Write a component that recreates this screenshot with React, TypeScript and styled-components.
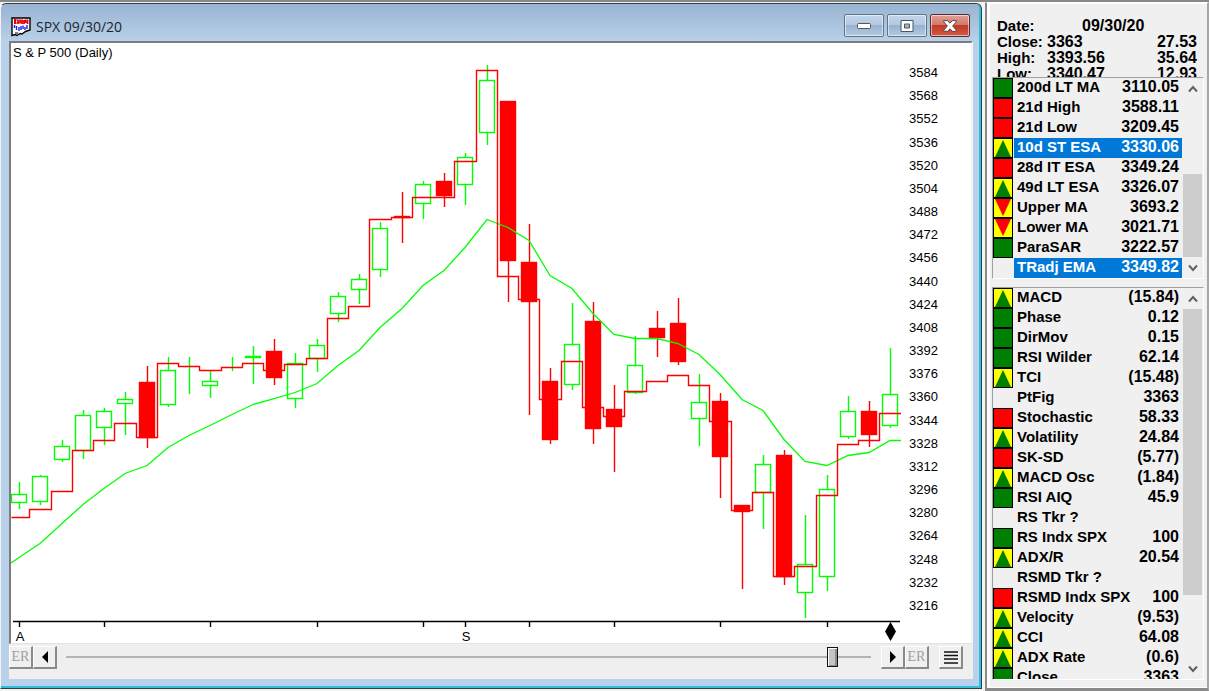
import React from 'react';
import styled, { createGlobalStyle } from 'styled-components';

const SANS = '"Liberation Sans", Arial, sans-serif';

const GlobalStyle = createGlobalStyle`
  * { box-sizing: border-box; }
  body { margin: 0; background: #f0f0f0; font-family: ${SANS}; color: #000; }
`;

const Desktop = styled.div`
  display: flex;
  height: 100vh;
  min-height: 480px;
  border-top: 2px solid #858a88;
  background: #f4f4f4;
  overflow: hidden;
`;

/* ---------- Chart window ---------- */

const ChartWindow = styled.main`
  flex: 1;
  min-width: 0;
  display: flex;
  flex-direction: column;
  margin: 1px 3px 2px 0;
  padding: 0 8px 9px;
  border: 1px solid #2d3e47;
  border-left-color: #eef4fa;
  border-radius: 6px 6px 0 0;
  background: linear-gradient(#99b4d1 0, #b9d1ea 38px, #b9d1ea 100%);
  box-shadow: inset -2px -2px 0 #2cc0dd;
`;

const TitleBar = styled.header`
  display: flex;
  align-items: center;
  gap: 5px;
  height: 37px;
  flex: none;
  padding: 8px 3px 0 2px;
`;

const Title = styled.h1`
  flex: 1;
  margin: 0;
  font: 400 14px/20px "Open Sans", "Segoe UI", sans-serif;
  color: #1a2430;
`;

const Caption = styled.div`
  display: flex;
  gap: 3px;
  margin-top: -2px;
`;

const CaptionButton = styled.button<{ $close?: boolean }>`
  display: flex;
  align-items: center;
  justify-content: center;
  width: 40px;
  height: 23px;
  padding: 0;
  border: 1px solid ${p => (p.$close ? '#5c2a2c' : '#5f738a')};
  border-radius: 2px;
  background: ${p =>
    p.$close
      ? 'linear-gradient(#e0a095 0, #d07a6c 46%, #c23a22 50%, #cf5a45 100%)'
      : 'linear-gradient(#c3d5e9 0, #b4c9e0 46%, #98b2cf 50%, #b3cae3 100%)'};
  box-shadow: inset 0 0 0 1px rgba(255, 255, 255, 0.55);
`;

const ChartView = styled.section`
  position: relative;
  flex: 1;
  min-height: 0;
  display: flex;
  border: solid;
  border-width: 2px 2px 1px 2px;
  border-color: #7c7c7c #f4f4f4 #e3e3e3 #7c7c7c;
  background: #fff;
`;

const ChartName = styled.h2`
  position: absolute;
  left: 2px;
  top: 2px;
  margin: 0;
  font-size: 13px;
  font-weight: 400;
  line-height: 16px;
`;

const Plot = styled.svg`
  flex: 1;
  min-width: 0;
  height: 100%;
  display: block;
`;

const PriceScale = styled.ol`
  flex: none;
  width: 70px;
  margin: 0;
  padding: 20px 0 27px 8px;
  list-style: none;
  display: flex;
  flex-direction: column;
  justify-content: space-between;
  font-size: 13px;
  line-height: 20px;
`;

const Toolbar = styled.footer`
  display: flex;
  flex: none;
  height: 35px;
  padding: 2px 10px 0 0;
  background: #efefef;
`;

const ToolButton = styled.button<{ $spaced?: boolean }>`
  display: flex;
  align-items: center;
  justify-content: center;
  flex: none;
  width: 24px;
  height: 23px;
  margin-left: ${p => (p.$spaced ? '10px' : '0')};
  padding: 0;
  border: solid;
  border-width: 1px 2px 2px 1px;
  border-color: #fff #8a8a8a #8a8a8a #fff;
  background: #f0f0f0;
  color: #a0a0a0;
  font: 400 14px/18px "Liberation Serif", serif;
`;

const DateSlider = styled.input`
  flex: 1;
  min-width: 0;
  height: 22px;
  margin: 0 10px 0 9px;
  appearance: none;
  background: transparent;
  &::-webkit-slider-runnable-track {
    height: 22px;
    background: linear-gradient(#b4b4b4, #b4b4b4) center / 100% 2px no-repeat;
  }
  &::-webkit-slider-thumb {
    appearance: none;
    width: 11px;
    height: 20px;
    margin-top: 1px;
    border: 1px solid #111;
    background: #c4c4c4;
    box-shadow: inset 1px 1px 0 #fff, inset -2px -1px 0 #8c8c8c;
  }
`;

/* ---------- Indicator panel ---------- */

const SidePanel = styled.aside`
  flex: none;
  width: 224px;
  display: flex;
  flex-direction: column;
  border: solid;
  border-width: 1px 2px 3px 2px;
  border-color: #fff #a6a6a6 #8a8a8a #8a8a8a;
  background: #f0f0f0;
  box-shadow: inset 3px 1px 0 #fff, inset 0 -1px 0 #fff;
  padding: 15px 3px 8px 5px;
`;

const Quote = styled.table`
  display: block;
  flex: none;
  height: 59px;
  overflow: hidden;
  border-collapse: collapse;
  font-size: 15px;
  font-weight: 700;
  line-height: 16px;
  padding-left: 5px;
  & th, & td { padding: 0; text-align: left; font-weight: 700; }
  & th { width: 50px; }
  & td { width: 75px; font-size: 16px; }
  & td:last-child { text-align: right; }
  & td[colspan] { text-align: left; padding-left: 35px; width: 150px; }
`;

const ListBox = styled.section<{ $grow?: boolean }>`
  display: flex;
  flex: ${p => (p.$grow ? '1 1 0' : '0 0 202px')};
  min-height: 0;
  margin-top: ${p => (p.$grow ? '8px' : '0')};
  overflow: hidden;
  border: 1px solid #a0a0a0;
  border-right-color: #fff;
  border-bottom-color: #fff;
`;

const RowsPane = styled.div`
  flex: 1;
  overflow: hidden;
`;

const Indicators = styled.table`
  width: 100%;
  border-collapse: collapse;
  table-layout: fixed;
  font-size: 15px;
  line-height: 18px;
`;

const Row = styled.tr<{ $selected?: boolean }>`
  height: 20px;
  color: ${p => (p.$selected ? '#fff' : '#000')};
  & > * { padding: 0; font-weight: 700; white-space: nowrap; }
  & > th { text-align: left; padding: 0 0 2px 3px; }
  & > td:last-child { text-align: right; padding: 0 3px 2px 0; font-size: 16px; }
  & > th, & > td:last-child {
    background: ${p => (p.$selected ? '#0078d7' : 'transparent')};
  }
`;

const SignalCell = styled.td`
  vertical-align: top;
  & svg { display: block; }
`;

const Scroll = styled.div`
  flex: none;
  width: 21px;
  padding-left: 1px;
  display: flex;
  flex-direction: column;
`;

const ScrollButton = styled.button`
  flex: none;
  height: 21px;
  width: 19px;
  padding: 0;
  border: 0;
  background: #f0f0f0;
  display: flex;
  align-items: center;
  justify-content: center;
`;

const ScrollTrack = styled.div<{ $end?: boolean }>`
  flex: 1;
  display: flex;
  align-items: ${p => (p.$end ? 'flex-end' : 'flex-start')};
`;

const ScrollThumb = styled.div<{ $size: string }>`
  width: 19px;
  height: ${p => p.$size};
  background: #cdcdcd;
`;

/* ---------- Data ---------- */

const STEP = 21.25;
const FIRST_X = 19;
const xAt = (i: number) => Math.round(FIRST_X + STEP * i);

type Candle = [up: number, high: number, top: number, bottom: number, low: number];

const candles: Candle[] = [
  [1, 482, 494, 502, 508], [1, 475, 476, 501, 504], [1, 440, 446, 459, 461],
  [1, 410, 415, 450, 458], [1, 408, 411, 427, 444], [1, 392, 399, 403, 434],
  [0, 366, 382, 438, 447], [1, 357, 370, 404, 406], [1, 357, 380, 380, 393],
  [1, 371, 381, 385, 397], [1, 357, 367, 367, 370], [1, 346, 356, 357, 383],
  [0, 339, 351, 378, 384], [1, 353, 363, 398, 407], [1, 339, 345, 358, 371],
  [1, 292, 296, 313, 321], [1, 274, 279, 289, 303], [1, 222, 228, 269, 276],
  [0, 192, 216, 218, 242], [1, 181, 184, 203, 218], [0, 173, 181, 196, 206],
  [1, 153, 157, 184, 204], [1, 65, 80, 132, 144], [0, 101, 101, 261, 301],
  [0, 224, 262, 302, 414], [0, 368, 381, 440, 443], [1, 303, 344, 384, 389],
  [0, 302, 321, 429, 443], [0, 385, 409, 427, 471], [1, 336, 365, 392, 393],
  [0, 311, 328, 338, 356], [0, 298, 323, 362, 364], [1, 374, 402, 418, 445],
  [0, 393, 401, 457, 497], [0, 505, 505, 512, 588], [1, 455, 464, 492, 528],
  [0, 450, 455, 577, 584], [1, 515, 564, 592, 617], [1, 475, 489, 576, 590],
  [1, 396, 411, 436, 438], [0, 401, 411, 435, 446], [1, 348, 394, 425, 427],
];

const trend = [
  517, 509, 491, 450, 440, 423, 437, 363, 366, 370, 367, 363, 370, 364, 358, 318,
  306, 219, 217, 197, 197, 161, 70, 276, 299, 399, 361, 407, 416, 391, 381, 375,
  385, 421, 510, 492, 576, 566, 495, 444, 440, 413,
];

const average = [
  557, 543, 523, 504, 488, 473, 465, 447, 435, 425, 414, 404, 398, 392, 383, 365,
  350, 327, 308, 285, 270, 247, 219, 227, 240, 275, 288, 313, 334, 338, 338, 343,
  354, 374, 399, 410, 439, 461, 465, 455, 452, 440,
];

const tickBars = [0, 4, 9, 14, 19, 21, 24, 28, 33, 38];

const trendPath = trend
  .map((y, i) => {
    const left = i === 0 ? 11 : xAt(i) - 11;
    return `${i === 0 ? 'M' : 'L'}${left + 0.5} ${y + 0.5}H${xAt(i + 1) - 10.5}`;
  })
  .join('');

const averagePath =
  'M11 563' + average.map((y, i) => `L${xAt(i)} ${y + 0.5}`).join('') + 'H901';

const prices = Array.from({ length: 24 }, (_, i) => 3584 - 16 * i);

type Signal = 'green' | 'red' | 'up' | 'down' | null;
type Item = [signal: Signal, name: string, value: string, selected?: boolean];

const averagesList: Item[] = [
  ['green', '200d LT MA', '3110.05'],
  ['red', '21d High', '3588.11'],
  ['red', '21d Low', '3209.45'],
  ['up', '10d ST ESA', '3330.06', true],
  ['red', '28d IT ESA', '3349.24'],
  ['up', '49d LT ESA', '3326.07'],
  ['down', 'Upper MA', '3693.2'],
  ['down', 'Lower MA', '3021.71'],
  ['green', 'ParaSAR', '3222.57'],
  [null, 'TRadj EMA', '3349.82', true],
];

const oscillatorsList: Item[] = [
  ['up', 'MACD', '(15.84)'],
  ['green', 'Phase', '0.12'],
  ['green', 'DirMov', '0.15'],
  ['green', 'RSI Wilder', '62.14'],
  ['up', 'TCI', '(15.48)'],
  [null, 'PtFig', '3363'],
  ['red', 'Stochastic', '58.33'],
  ['up', 'Volatility', '24.84'],
  ['red', 'SK-SD', '(5.77)'],
  ['up', 'MACD Osc', '(1.84)'],
  ['green', 'RSI AIQ', '45.9'],
  [null, 'RS Tkr ?', ''],
  ['green', 'RS Indx SPX', '100'],
  ['up', 'ADX/R', '20.54'],
  [null, 'RSMD Tkr ?', ''],
  ['red', 'RSMD Indx SPX', '100'],
  ['up', 'Velocity', '(9.53)'],
  ['up', 'CCI', '64.08'],
  ['up', 'ADX Rate', '(0.6)'],
  ['green', 'Close', '3363'],
];

/* ---------- Pieces ---------- */

function SignalIcon({ kind }: { kind: Signal }) {
  if (!kind) return null;
  const fill = kind === 'green' ? '#008000' : kind === 'red' ? '#ff0000' : '#ffff00';
  return (
    <svg width="20" height="20" viewBox="0 0 20 20" aria-label={kind} role="img">
      <rect x="0.5" y="0.5" width="19" height="19" fill={fill} stroke="#000" />
      {kind === 'up' && <path d="M10 2L18 19H2Z" fill="#008000" />}
      {kind === 'down' && <path d="M2 1H18L10 18Z" fill="#ff0000" />}
    </svg>
  );
}

function Chevron({ down }: { down?: boolean }) {
  return (
    <svg width="10" height="8" viewBox="0 0 10 8" aria-hidden="true">
      <path
        d={down ? 'M1 1.5L5 6L9 1.5' : 'M1 6.5L5 2L9 6.5'}
        fill="none"
        stroke="#606060"
        strokeWidth="2"
      />
    </svg>
  );
}

function IndicatorList({ label, items, thumb, end, grow }: {
  label: string; items: Item[]; thumb: string; end?: boolean; grow?: boolean;
}) {
  return (
    <ListBox $grow={grow} aria-label={label}>
      <RowsPane>
        <Indicators>
          <colgroup>
            <col width="21" />
            <col />
            <col width="62" />
          </colgroup>
          <tbody>
            {items.map(([signal, name, value, selected]) => (
              <Row key={name} $selected={selected}>
                <SignalCell><SignalIcon kind={signal} /></SignalCell>
                <th scope="row">{name}</th>
                <td>{value}</td>
              </Row>
            ))}
          </tbody>
        </Indicators>
      </RowsPane>
      <Scroll>
        <ScrollButton aria-label="Scroll up"><Chevron /></ScrollButton>
        <ScrollTrack $end={end}><ScrollThumb $size={thumb} /></ScrollTrack>
        <ScrollButton aria-label="Scroll down"><Chevron down /></ScrollButton>
      </Scroll>
    </ListBox>
  );
}

function CandleShape({ candle, index }: { candle: Candle; index: number }) {
  const [up, high, top, bottom, low] = candle;
  const x = xAt(index);
  const color = up ? '#00ff00' : '#ff0000';
  return (
    <g stroke={color}>
      <path d={`M${x + 0.5} ${high}V${top}M${x + 0.5} ${bottom}V${low + 1}`} />
      {up ? (
        <rect x={x - 7.5} y={top + 0.5} width="15" height={bottom - top} fill="none" />
      ) : (
        <rect x={x - 7.5} y={top + 0.5} width="15" height={bottom - top - 1} fill={color} />
      )}
    </g>
  );
}

function CandleChart() {
  return (
    <Plot viewBox="11 43 890 600" preserveAspectRatio="xMinYMin meet" role="img" aria-label="S & P 500 daily candles">
      <g fill="none" strokeWidth="1.4">
        {candles.map((c, i) => <CandleShape key={i} candle={c} index={i} />)}
        <path d={averagePath} stroke="#00ff00" strokeWidth="1.3" />
        <path d={trendPath} stroke="#ff0000" />
        <path d="M13 621.5H900" stroke="#000" />
        {tickBars.map(i => (
          <path key={i} d={`M${xAt(i) + 0.5} 622V627`} stroke="#000" />
        ))}
      </g>
      <path d="M890.5 622L896 631.5L890.5 641L885 631.5Z" fill="#000" />
      <text x="20" y="641" fontSize="13" textAnchor="middle">A</text>
      <text x="466" y="641" fontSize="13" textAnchor="middle">S</text>
    </Plot>
  );
}

function AppIcon() {
  return (
    <svg width="20" height="20" viewBox="0 0 20 20" aria-hidden="true">
      <path d="M1 1H19V13L14.500 14.500L11 17L9 16.500L6 18.500L4 17.500L1 18.500Z" fill="#fff" stroke="#000" strokeWidth="1.4" />
      <path d="M3 3H5.500M3 4.500H5M3 6H5.500M7 2.500V7M9 2.500V6.500M11 2.500V7M13 3V7M14.500 2.500V6M16.500 2.500V7" stroke="#e80000" strokeWidth="1.8" />
      <path d="M3.500 8V11M5.500 9V13M8 10V14M10 9V13M12 8.500V12M14 10V13M16 8V12" stroke="#2020e8" strokeWidth="1.4" />
      <path d="M4 16H7" stroke="#000" />
    </svg>
  );
}

export default function App() {
  return (
    <>
      <GlobalStyle />
      <Desktop>
        <ChartWindow>
          <TitleBar>
            <AppIcon />
            <Title>SPX 09/30/20</Title>
            <Caption>
              <CaptionButton aria-label="Minimize">
                <svg width="14" height="6" viewBox="0 0 14 6">
                  <rect x="0.5" y="0.5" width="13" height="5" rx="1" fill="#fff" stroke="#4b5664" />
                </svg>
              </CaptionButton>
              <CaptionButton aria-label="Maximize">
                <svg width="14" height="12" viewBox="0 0 14 12">
                  <path fillRule="evenodd" d="M1 .5H13V11.5H1ZM4.500 4H9.500V8H4.500Z" fill="#fff" stroke="#4b5664" />
                </svg>
              </CaptionButton>
              <CaptionButton $close aria-label="Close">
                <svg width="14" height="12" viewBox="0 0 14 12">
                  <path d="M.7 .7H4.700L7 3.200L9.300 .7H13.300V1.800L9.700 6L13.300 10.200V11.300H9.300L7 8.800L4.700 11.300H.7V10.200L4.300 6L.7 1.800Z" fill="#fff" stroke="#5a4048" />
                </svg>
              </CaptionButton>
            </Caption>
          </TitleBar>
          <ChartView>
            <CandleChart />
            <PriceScale>
              {prices.map(p => <li key={p}>{p}</li>)}
            </PriceScale>
            <ChartName>S &amp; P 500 (Daily)</ChartName>
          </ChartView>
          <Toolbar>
            <ToolButton disabled>ER</ToolButton>
            <ToolButton aria-label="Previous bar">
              <svg width="8" height="12" viewBox="0 0 8 12"><path d="M7 0V12L1 6Z" fill="#000" /></svg>
            </ToolButton>
            <DateSlider type="range" aria-label="Chart date" min="0" max="1000" defaultValue="958" />
            <ToolButton aria-label="Next bar">
              <svg width="8" height="12" viewBox="0 0 8 12"><path d="M1 0V12L7 6Z" fill="#000" /></svg>
            </ToolButton>
            <ToolButton disabled>ER</ToolButton>
            <ToolButton $spaced aria-label="Chart options">
              <svg width="14" height="13" viewBox="0 0 14 13">
                <path d="M0 1H14M0 4.500H14M0 8H14M0 12H14" stroke="#111" strokeWidth="1.300" />
              </svg>
            </ToolButton>
          </Toolbar>
        </ChartWindow>
        <SidePanel>
          <Quote>
            <tbody>
              <tr><th scope="row">Date:</th><td colSpan={2}>09/30/20</td></tr>
              <tr><th scope="row">Close:</th><td>3363</td><td>27.53</td></tr>
              <tr><th scope="row">High:</th><td>3393.56</td><td>35.64</td></tr>
              <tr><th scope="row">Low:</th><td>3340.47</td><td>12.93</td></tr>
            </tbody>
          </Quote>
          <IndicatorList label="Moving averages" items={averagesList} thumb="83px" end />
          <IndicatorList label="Oscillators" items={oscillatorsList} thumb="82%" grow />
        </SidePanel>
      </Desktop>
    </>
  );
}
